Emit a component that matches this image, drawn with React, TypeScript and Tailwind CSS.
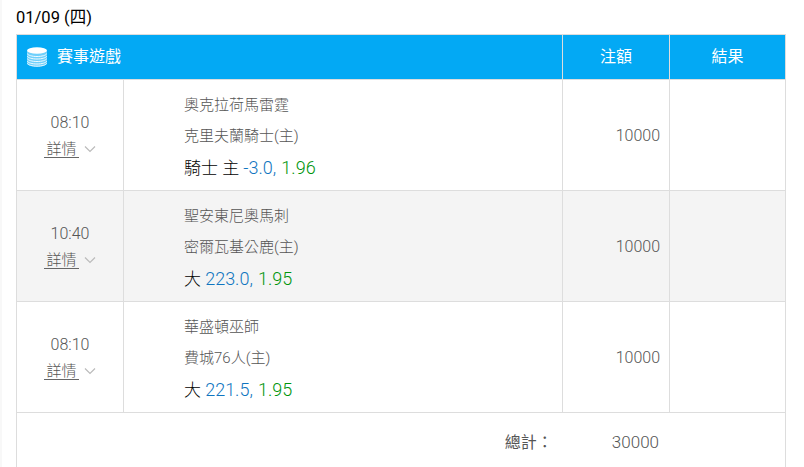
import React from 'react';

const rows = [
  { time: '08:10', away: '奧克拉荷馬雷霆', home: '克里夫蘭騎士(主)', pick: '騎士 主', line: '-3.0,', odds: '1.96', stake: '10000', shaded: false },
  { time: '10:40', away: '聖安東尼奧馬刺', home: '密爾瓦基公鹿(主)', pick: '大', line: '223.0,', odds: '1.95', stake: '10000', shaded: true },
  { time: '08:10', away: '華盛頓巫師', home: '費城76人(主)', pick: '大', line: '221.5,', odds: '1.95', stake: '10000', shaded: false },
];

const StackIcon = () => (
  <svg width="20" height="20" viewBox="0 0 20 20" className="shrink-0">
    <path d="M0 4v12c0 2 4.500 3.500 10 3.500s10-1.500 10-3.500V4z" fill="#6fd0fb" />
    <ellipse cx="10" cy="3.500" rx="10" ry="3.200" fill="#fff" />
    <path
      d="M0 6.500c1 1.800 5 3 10 3s9-1.200 10-3M0 9c1 1.800 5 3 10 3s9-1.200 10-3M0 11.500c1 1.800 5 3 10 3s9-1.200 10-3M0 14c1 1.800 5 3 10 3s9-1.200 10-3M0 16.200c1 1.800 5 3 10 3s9-1.200 10-3"
      fill="none"
      stroke="#f2fbff"
      strokeWidth="1"
    />
  </svg>
);

const App = () => {
  return (
    <div className="w-[804px] h-[467px] overflow-hidden border-l-2 border-[#f8f8f8] bg-white font-['Roboto','Noto_Sans_CJK_TC',sans-serif] font-light text-[15px] text-[#555]">
      <div className="h-[34px] pl-[14px] pt-[8px] text-[16.5px] font-normal leading-[20px] text-black">01/09 (四)</div>
      <div className="ml-[14px] w-[770px] border-l border-r border-t border-[#ddd]">
        {/* Header */}
        <div className="flex h-[45px] border-b border-[#ddd] bg-[#03a9f4] text-[16px] font-normal text-white">
          <div className="flex w-[545px] items-center gap-[10px] pl-[10px]">
            <StackIcon />
            <span>賽事遊戲</span>
          </div>
          <div className="flex w-[107px] items-center justify-center border-l border-[#ddd]">注額</div>
          <div className="flex flex-1 items-center justify-center border-l border-[#ddd]">結果</div>
        </div>

        {/* Rows */}
        {rows.map((r, i) => (
          <div key={i} className={`flex h-[111px] border-b border-[#ddd] ${r.shaded ? 'bg-[#f4f4f4]' : 'bg-white'}`}>
            <div className="flex w-[106px] flex-col items-center pt-[31px]">
              <div className="text-[16px] leading-[24px]">{r.time}</div>
              <div className="mt-[7px] flex items-center">
                <span className="border-b border-[#666] px-[2px] leading-[15px]">詳情</span>
                <svg width="12" height="12" viewBox="0 0 12 12" className="ml-[5px] mb-[3px]">
                  <path d="M1 3.500l5 5 5-5" fill="none" stroke="#bbb" strokeWidth="1.200" />
                </svg>
              </div>
            </div>
            <div className="w-[439px] border-l border-[#ddd] pl-[60px] pt-[15px]">
              <div className="leading-[20px]">{r.away}</div>
              <div className="mt-[11px] leading-[20px]">{r.home}</div>
              <div className="mt-[10px] text-[17px] leading-[24px] text-black">
                {r.pick} <span className="text-[18px] text-[#0f75c0]">{r.line}</span> <span className="ml-[1px] text-[18px] text-[#00950c]">{r.odds}</span>
              </div>
            </div>
            <div className="flex w-[107px] items-center justify-end border-l border-[#ddd] pr-[9px] pt-[2px] text-[16px]">{r.stake}</div>
            <div className="flex-1 border-l border-[#ddd]" />
          </div>
        ))}

        {/* Total */}
        <div className="flex h-[55px] items-center justify-end pr-[126px] pt-[4px]">
          <span className="mr-[59px] text-[16px] font-normal">總計：</span>
          <span className="text-[17px]">30000</span>
        </div>
      </div>
    </div>
  );
};

export default App;
